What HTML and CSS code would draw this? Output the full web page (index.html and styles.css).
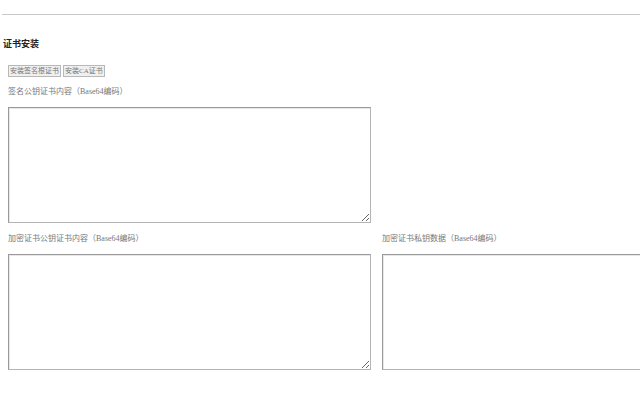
FILE: index.html
```html
<!DOCTYPE html>
<html lang="zh-CN">
<head>
    <meta charset="UTF-8">
    <title>证书安装</title>
    <link rel="stylesheet" href="styles.css">
</head>
<body>
    <hr class="top-line">
    <h3 class="title">证书安装</h3>

    <div class="toolbar">
        <button class="button" type="button">安装签名根证书</button>
        <button class="button" type="button">安装CA证书</button>
    </div>

    <div class="fields">
        <div class="field">
            <label for="sign-cert">签名公钥证书内容（Base64编码）</label>
            <textarea id="sign-cert"></textarea>
        </div>
        <div class="field"></div>
        <div class="field">
            <label for="enc-cert">加密证书公钥证书内容（Base64编码）</label>
            <textarea id="enc-cert"></textarea>
        </div>
        <div class="field">
            <label for="enc-key">加密证书私钥数据（Base64编码）</label>
            <textarea id="enc-key"></textarea>
        </div>
    </div>
</body>
</html>
```

FILE: styles.css
```css
html {
    overflow: hidden;
}
body {
    font-family: "Liberation Serif", "Noto Sans CJK SC", serif;
    margin: 0;
    padding: 0;
    width: 640px;
    color: #333;
    overflow: hidden;
}
.top-line {
    margin: 14px 0 0 2px;
    border: none;
    border-top: 1px solid #c8c8c8;
    height: 0;
}
.title {
    margin: 23px 0 0 3px;
    font-size: 9px;
    line-height: 12px;
    font-weight: bold;
    color: #222;
}
.toolbar {
    margin: 15px 0 0 8px;
    display: flex;
    gap: 2px;
}
.button {
    font-family: inherit;
    font-size: 7px;
    line-height: 10px;
    height: 12px;
    padding: 0 1px;
    color: #777;
    background-color: #f0f0f0;
    border: 1px solid #b8b8b8;
    border-radius: 0;
}
.fields {
    display: grid;
    grid-template-columns: 363px 363px;
    column-gap: 11px;
    row-gap: 10px;
    margin: 9px 0 0 8px;
}
.field label {
    display: block;
    font-size: 8px;
    line-height: 12px;
    color: #777;
    margin-bottom: 9px;
}
textarea {
    display: block;
    width: 363px;
    height: 116px;
    box-sizing: border-box;
    border: 1px solid #b4b4b4;
    border-top-color: #9a9a9a;
    border-left-color: #9a9a9a;
    box-shadow: inset 1px 1px 0 #e8e8e8;
    margin: 0;
    resize: both;
}
```
